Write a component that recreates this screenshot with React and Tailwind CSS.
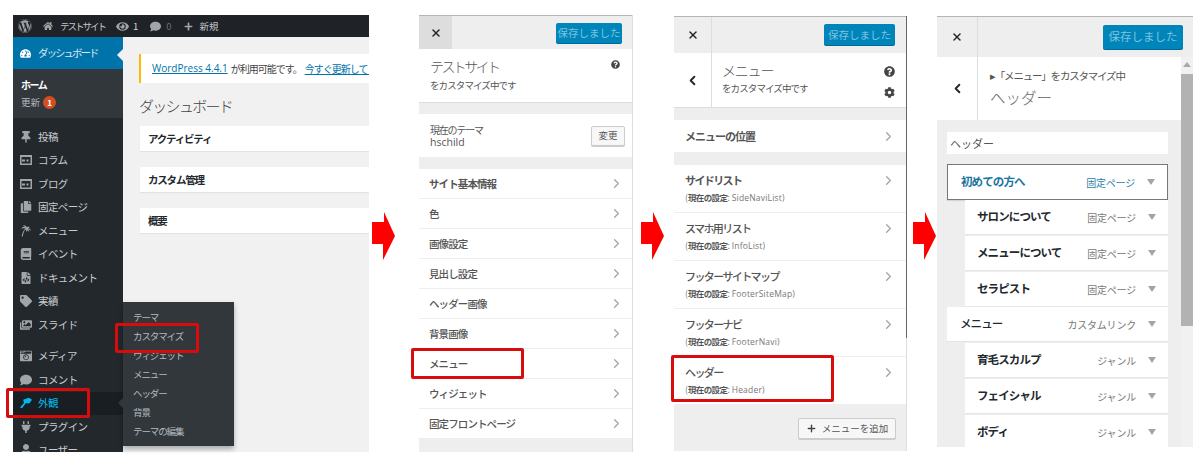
import React from "react";
import { ChevronRight, ChevronLeft, X, Plus } from "lucide-react";
import {
  FaWordpress, FaHome, FaEye, FaComment, FaPlus, FaTachometerAlt, FaThumbtack,
  FaCopy, FaBook, FaFileCode, FaTag, FaImages, FaCameraRetro, FaPlug, FaUser, FaQuestionCircle, FaCog,
} from "react-icons/fa";
import { GiPalmTree } from "react-icons/gi";

const jp = "font-['Noto_Sans_CJK_JP','Noto_Sans',sans-serif]";

function RedBox({ className }) {
  return <div className={`absolute border-[3px] border-[#d80c0c] rounded-[2px] ${className}`} />;
}

function Arrow({ className }) {
  return (
    <svg width="24" height="48" viewBox="0 0 24 48" className={`shrink-0 ${className}`}>
      <polygon points="0,10 12,10 12,0 23,24 11,48 11,32 0,32" fill="#ff0000" />
    </svg>
  );
}

function ColumnIcon({ size, className }) {
  return (
    <svg width={size} height={size} viewBox="0 0 12 12" className={className}>
      <path fill="currentColor" fillRule="evenodd" d="M0 1h12v10H0z M1.5 3v6.5h9V3z" />
      <rect x="2" y="5.5" width="3" height="2" fill="currentColor" />
      <rect x="6.5" y="5.5" width="2" height="2" fill="currentColor" />
    </svg>
  );
}

function BrushIcon({ size, className }) {
  return (
    <svg width={size} height={size} viewBox="0 0 15 13" className={className}>
      <path fill="currentColor" d="M0 12 L5 6.5 L4 2.5 L11 0 L15 2.5 L11.5 7 L7.5 6.5 L2.5 13 Z" />
    </svg>
  );
}

const menu1 = [
  [FaThumbtack, "投稿"],
  [ColumnIcon, "コラム"],
  [ColumnIcon, "ブログ"],
  [FaCopy, "固定ページ"],
  [GiPalmTree, "メニュー"],
  [FaBook, "イベント"],
  [FaFileCode, "ドキュメント"],
  [FaTag, "実績"],
  [FaImages, "スライド"],
];
const menu2 = [
  [FaCameraRetro, "メディア"],
  [FaComment, "コメント"],
  [BrushIcon, "外観", true],
  [FaPlug, "プラグイン"],
  [FaUser, "ユーザー"],
];

function SideItem({ Icon, label, active }) {
  return (
    <div className={`h-[23.5px] flex items-center pl-[7px] text-[10.5px] tracking-[-0.6px] ${active ? "bg-[#191e23] text-[#00b9eb]" : "text-[#c9ccce]"}`}>
      <span className="w-[18px] flex justify-start">
        <Icon size={12} className={active ? "text-[#00b9eb]" : "text-[#a0a5aa]"} />
      </span>
      <span>{label}</span>
    </div>
  );
}

function Card({ children, className }) {
  return (
    <div className={`bg-white h-[25px] flex items-center pl-[8px] text-[10.5px] tracking-[-1.2px] font-bold text-[#23282d] shadow-[0_1px_1px_rgba(0,0,0,0.06)] ${className}`}>
      {children}
    </div>
  );
}

function Panel1() {
  return (
    <div className={`ml-[13px] mt-[15px] w-[356px] h-[437px] shrink-0 overflow-hidden flex flex-col bg-[#f1f1f1] ${jp}`}>
      <div className="h-[22px] bg-[#1f2327] flex items-center text-[#b4b9be] text-[9.5px] shrink-0">
        <FaWordpress size={14} className="ml-[5px] text-[#a0a5aa]" />
        <FaHome size={10} className="ml-[11px] text-[#a0a5aa]" />
        <span className="ml-[7px] text-[#c3c6c9] tracking-[-2px] w-[44px] whitespace-nowrap">テストサイト</span>
        <FaEye size={13} className="ml-[12px] text-[#a0a5aa]" />
        <span className="ml-[4px] text-[#d5d7d9]">1</span>
        <FaComment size={11} className="ml-[12px] text-[#a0a5aa]" />
        <span className="ml-[5px] text-[#6b7075]">0</span>
        <FaPlus size={9} className="ml-[12px] text-[#a0a5aa]" />
        <span className="ml-[7px] text-[#c3c6c9]">新規</span>
      </div>
      <div className="flex flex-1 min-h-0">
        <div className="w-[110px] bg-[#23282d] shrink-0 relative">
          <div className="h-[32px] bg-[#0073aa] flex items-center pl-[7px] text-[10.5px] tracking-[-2px] text-[#d5e8f1] relative">
            <span className="w-[18px]"><FaTachometerAlt size={11} className="text-white" /></span>
            ダッシュボード
            <span className="absolute right-0 top-[12px] border-y-[6px] border-y-transparent border-r-[6px] border-r-[#f1f1f1]" />
          </div>
          <div className="h-[49px] bg-[#32373c] pt-[6px] pl-[8px]">
            <div className="text-[10px] tracking-[-1.5px] font-bold text-white h-[18px] flex items-center">ホーム</div>
            <div className="text-[9.5px] text-[#b4b9be] h-[19px] flex items-center">
              更新
              <span className="ml-[3px] w-[13px] h-[13px] rounded-full bg-[#d54e21] text-white text-[8px] font-bold flex items-center justify-center">1</span>
            </div>
          </div>
          <div className="h-[7px]" />
          {menu1.map(([I, l]) => <SideItem key={l} Icon={I} label={l} />)}
          <div className="h-[8px]" />
          {menu2.map(([I, l, a]) => <SideItem key={l} Icon={I} label={l} active={a} />)}
        </div>
        <div className="flex-1 pl-[16px] pt-[17px] min-w-0 overflow-hidden">
          <div className="h-[29px] bg-white border-l-2 border-[#ffb900] flex items-center pl-[11px] text-[10px] text-[#444] whitespace-nowrap overflow-hidden">
            <span className="text-[#0073aa] underline font-['Open_Sans',sans-serif]">WordPress 4.4.1</span>
            <span className="ml-[3px] tracking-[-1px]">が利用可能です。</span>
            <span className="text-[#0073aa] underline ml-[3px] tracking-[-1px]">今すぐ更新してく</span>
          </div>
          <div className="mt-[13px] h-[20px] flex items-center text-[15px] tracking-[-1.7px] font-light text-[#444]">ダッシュボード</div>
          <Card className="mt-[10px] ml-[1px]">アクティビティ</Card>
          <Card className="mt-[16px] ml-[1px]">カスタム管理</Card>
          <Card className="mt-[16px] ml-[1px]">概要</Card>
        </div>
      </div>
    </div>
  );
}

function Flyout() {
  const items = ["テーマ", "カスタマイズ", "ウィジェット", "メニュー", "ヘッダー", "背景", "テーマの編集"];
  return (
    <div className={`absolute left-[123px] top-[302px] w-[111px] h-[144px] bg-[#32373c] shadow-[0_3px_5px_rgba(0,0,0,0.3)] pt-[6px] pl-[10px] ${jp}`}>
      {items.map((t) => (
        <div key={t} className="h-[19px] flex items-center text-[9.5px] tracking-[-1.1px] text-[#b4b9be]">{t}</div>
      ))}
      <span className="absolute left-[-5px] top-[96px] border-y-[5px] border-y-transparent border-r-[5px] border-r-[#32373c]" />
    </div>
  );
}

function TopBar({ h, closeW, closeBg, btnW, btnH, right, top, iconSize = 12, divider, btnText = "text-[10.5px]" }) {
  return (
    <div className="bg-[#eeeeee] border-t border-[#b5b5b5] flex items-start justify-between shrink-0" style={{ height: h }}>
      <div className={`h-full flex items-center justify-center ${closeBg} ${divider ? "border-r border-[#dddddd]" : ""}`} style={{ width: closeW }}>
        <X size={iconSize} strokeWidth={3} className="text-[#23282d]" />
      </div>
      <div
        className={`bg-[#0085ba] rounded-[2px] flex items-center justify-center ${btnText} text-[#7cc4e0] shadow-[0_1px_0_#006799]`}
        style={{ width: btnW, height: btnH, marginRight: right, marginTop: top }}
      >
        保存しました
      </div>
    </div>
  );
}

function Panel2() {
  const items = ["サイト基本情報", "色", "画像設定", "見出し設定", "ヘッダー画像", "背景画像", "メニュー", "ウィジェット", "固定フロントページ"];
  return (
    <div className={`ml-[23px] mt-[15px] w-[214px] h-[437px] shrink-0 flex flex-col bg-[#eeeeee] border-r border-[#dddddd] ${jp}`}>
      <TopBar h={34} closeW={33} closeBg="bg-[#dddddd]" btnW={66} btnH={20} right={10} top={7} />
      <div className="h-[54px] bg-white border-b border-[#dddddd] pl-[11px] pr-[11px] pt-[6px] flex justify-between shrink-0">
        <div>
          <div className="text-[14px] leading-[22px] tracking-[-2.6px] font-light text-[#555]">テストサイト</div>
          <div className="text-[9.5px] leading-[14px] tracking-[-0.9px] text-[#555] mt-[1px]">をカスタマイズ中です</div>
        </div>
        <FaQuestionCircle size={9} className="text-[#444] mt-[5px] mr-[1px]" />
      </div>
      <div className="h-[11px] shrink-0" />
      <div className="h-[43px] bg-white flex items-center justify-between pl-[11px] pr-[7px] shrink-0">
        <div className="text-[10px] leading-[13px] text-[#555]">
          <div className="tracking-[-1.2px]">現在のテーマ</div>
          <div className="font-['Open_Sans',sans-serif] text-[10.5px]">hschild</div>
        </div>
        <div className="w-[34px] h-[20px] bg-[#f7f7f7] border border-[#cccccc] rounded-[2px] shadow-[0_1px_0_#ccc] flex items-center justify-center text-[9.5px] text-[#555]">変更</div>
      </div>
      <div className="h-[12px] shrink-0" />
      {items.map((t, i) => (
        <div key={t} className="h-[30px] bg-white border-b border-[#eeeeee] flex items-center justify-between pl-[10px] pr-[8px] shrink-0">
          <span className={`text-[10.5px] tracking-[-0.9px] text-[#555] ${i === 0 ? "font-bold" : "font-medium"}`}>{t}</span>
          <ChevronRight size={15} strokeWidth={2} className="text-[#a0a5aa]" />
        </div>
      ))}
    </div>
  );
}

function Panel3() {
  const rows = [
    ["サイドリスト", "SideNaviList", true],
    ["スマホ用リスト", "InfoList"],
    ["フッターサイトマップ", "FooterSiteMap"],
    ["フッターナビ", "FooterNavi"],
    ["ヘッダー", "Header"],
  ];
  return (
    <div className={`ml-[9px] mt-[16px] w-[233px] h-[435px] shrink-0 flex flex-col bg-[#eeeeee] relative ${jp}`}>
      <TopBar h={37} closeW={38} closeBg="" btnW={71} btnH={21} right={12} top={7} divider />
      <div className="h-[55px] bg-white border-b border-[#dddddd] flex shrink-0">
        <div className="w-[38px] border-r border-[#dddddd] flex items-center justify-center">
          <ChevronLeft size={15} strokeWidth={3} className="text-[#23282d]" />
        </div>
        <div className="pl-[10px] pt-[7px] flex-1">
          <div className="text-[14px] leading-[20px] tracking-[-1.2px] font-light text-[#555]">メニュー</div>
          <div className="text-[9.5px] leading-[14px] tracking-[-0.9px] text-[#555] mt-[1px]">をカスタマイズ中です</div>
        </div>
        <div className="flex flex-col gap-[10px] pt-[13px] pr-[12px]">
          <FaQuestionCircle size={11} className="text-[#444]" />
          <FaCog size={11} className="text-[#444]" />
        </div>
      </div>
      <div className="h-[12px] shrink-0" />
      <div className="h-[32px] bg-white flex items-center justify-between pl-[11px] pr-[11px] shrink-0">
        <span className="text-[11px] tracking-[-1px] font-bold text-[#555]">メニューの位置</span>
        <ChevronRight size={15} className="text-[#a0a5aa]" />
      </div>
      <div className="h-[13px] shrink-0" />
      {rows.map(([t, s, b]) => (
        <div key={t} className="h-[48px] bg-white border-b border-[#eeeeee] flex justify-between pl-[11px] pr-[11px] pt-[6px] shrink-0">
          <div>
            <div className={`text-[11px] leading-[18px] tracking-[-1.6px] text-[#555] ${b ? "font-bold" : "font-medium"}`}>{t}</div>
            <div className="text-[8.5px] leading-[14px] text-[#777] mt-[1px]">
              (<b className="text-[#555] tracking-[-0.6px]">現在の設定</b>: <span className="font-['Open_Sans',sans-serif] tracking-[0.2px]">{s})</span>
            </div>
          </div>
          <ChevronRight size={15} className="text-[#a0a5aa] mt-[2px]" />
        </div>
      ))}
      <div className="flex justify-end pt-[13px] pr-[11px]">
        <div className="w-[98px] h-[21px] bg-[#f7f7f7] border border-[#cccccc] rounded-[2px] shadow-[0_1px_0_#ccc] flex items-center justify-center gap-[5px] text-[9.5px] text-[#555]">
          <Plus size={11} strokeWidth={3} className="text-[#444]" />
          メニューを追加
        </div>
      </div>
      <div className="absolute right-0 top-0 w-px h-[322px] bg-[#6b6560]" />
      <div className="absolute right-0 top-[322px] w-px h-[113px] bg-[#dddddd]" />
    </div>
  );
}

function MenuRow({ label, type, child, open, top, h = 35 }) {
  return (
    <div
      className={`flex items-center justify-between bg-white shrink-0 ${child ? "ml-[18px] pl-[12px]" : "pl-[13px]"} ${open ? "border border-[#777777] shadow-[0_1px_1px_rgba(0,0,0,0.1)]" : "border-b border-[#e5e5e5]"}`}
      style={{ marginTop: top || 0, height: h }}
    >
      <span className={`text-[11.5px] tracking-[-0.9px] whitespace-nowrap ${open ? "font-bold text-[#1a75a0]" : child ? "font-bold text-[#23282d]" : "font-medium text-[#23282d]"}`}>{label}</span>
      <div className="flex items-center">
        <span className={`text-[10px] tracking-[-0.2px] ${open ? "text-[#2a7ea8]" : "text-[#777]"}`}>{type}</span>
        <span className="w-[32px] flex justify-center">
          <svg width="8" height="6" viewBox="0 0 8 6"><polygon points="0,0 8,0 4,6" fill="#a0a5aa" /></svg>
        </span>
      </div>
    </div>
  );
}

function Panel4() {
  return (
    <div className={`mt-[16px] w-[256px] h-[431px] shrink-0 flex flex-col bg-[#eeeeee] overflow-hidden ${jp}`}>
      <TopBar h={41} closeW={41} closeBg="" btnW={80} btnH={24} right={10} top={8} divider btnText="text-[11.5px]" />
      <div className="flex flex-1 min-h-0">
        <div className="flex-1 min-w-0 flex flex-col">
          <div className="h-[63px] bg-white flex shrink-0">
            <div className="w-[41px] border-r border-[#dddddd] flex items-center justify-center">
              <ChevronLeft size={15} strokeWidth={3} className="text-[#23282d]" />
            </div>
            <div className="pl-[12px] pt-[11px]">
              <div className="text-[10.5px] leading-[16px] tracking-[-1.2px] text-[#555]">▸「メニュー」をカスタマイズ中</div>
              <div className="text-[15.5px] leading-[24px] font-light text-[#666] mt-[1px]">ヘッダー</div>
            </div>
          </div>
          <div className="pl-[10px] pr-[13px] pt-[12px] flex flex-col">
            <div className="h-[22px] bg-white flex items-center pl-[3px] text-[11px] text-[#555] shrink-0">ヘッダー</div>
            <MenuRow label="初めての方へ" type="固定ページ" open top={10} h={36} />
            <MenuRow label="サロンについて" type="固定ページ" child />
            <MenuRow label="メニューについて" type="固定ページ" child top={1} />
            <MenuRow label="セラピスト" type="固定ページ" child top={1} />
            <MenuRow label="メニュー" type="カスタムリンク" />
            <MenuRow label="育毛スカルプ" type="ジャンル" child top={1} />
            <MenuRow label="フェイシャル" type="ジャンル" child top={1} />
            <MenuRow label="ボディ" type="ジャンル" child top={1} />
          </div>
        </div>
        <div className="w-[12px] bg-[#f1f1f1] shrink-0 flex flex-col items-center">
          <svg width="8" height="5" viewBox="0 0 8 5" className="mt-[5px] mb-[7px] shrink-0"><polygon points="0,5 8,5 4,0" fill="#a8a8a8" /></svg>
          <div className="w-full h-[252px] bg-[#b2b2b2] shrink-0" />
        </div>
      </div>
    </div>
  );
}

export default function App() {
  return (
    <div className="relative w-[1203px] h-[474px] bg-white flex items-start overflow-hidden">
      <Panel1 />
      <Arrow className="ml-[3px] mt-[212px]" />
      <Panel2 />
      <Arrow className="ml-[8px] mt-[212px]" />
      <Panel3 />
      <Arrow className="ml-[6px] mt-[212px]" />
      <Panel4 />
      <Flyout />
      <RedBox className="left-[115px] top-[323px] w-[84px] h-[30px]" />
      <RedBox className="left-[6px] top-[388px] w-[84px] h-[30px]" />
      <RedBox className="left-[411px] top-[348px] w-[113px] h-[31px]" />
      <RedBox className="left-[671px] top-[355px] w-[163px] h-[47px]" />
    </div>
  );
}
